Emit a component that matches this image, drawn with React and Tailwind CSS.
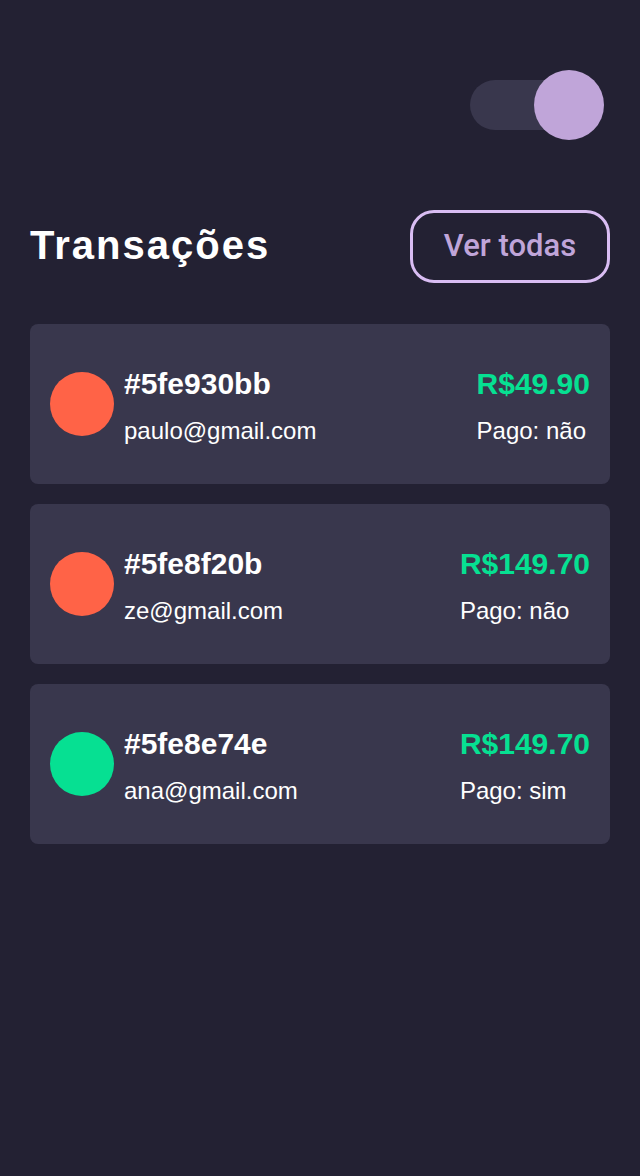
const transacoes = [
  { id: '#5fe930bb', email: 'paulo@gmail.com', valor: 'R$49.90', pago: false },
  { id: '#5fe8f20b', email: 'ze@gmail.com', valor: 'R$149.70', pago: false },
  { id: '#5fe8e74e', email: 'ana@gmail.com', valor: 'R$149.70', pago: true },
];

function Toggle() {
  return (
    <div className="flex justify-end pr-[10px]">
      <div className="relative w-[130px] h-[50px] rounded-full bg-[#39374d]">
        <div className="absolute right-[-4px] top-[-10px] w-[70px] h-[70px] rounded-full bg-[#c0a5d9]" />
      </div>
    </div>
  );
}

function TransacaoCard({ t }) {
  return (
    <div className="flex items-center justify-between rounded-lg bg-[#39374d] h-[160px] px-5">
      <div className="flex items-center">
        <div
          className={
            'w-16 h-16 rounded-full ' + (t.pago ? 'bg-[#06e092]' : 'bg-[#ff6347]')
          }
        />
        <div className="ml-[10px] mt-[3px] flex flex-col">
          <span className="text-[30px] leading-[34px] font-bold text-white">{t.id}</span>
          <span className="mt-[16px] text-[24px] leading-[28px] text-white">{t.email}</span>
        </div>
      </div>
      <div className="mt-[3px] flex flex-col">
        <span className="text-[30px] leading-[34px] font-bold text-[#06e092]">{t.valor}</span>
        <span className="mt-[16px] text-[24px] leading-[28px] text-white">
          Pago: {t.pago ? 'sim' : 'não'}
        </span>
      </div>
    </div>
  );
}

export default function App() {
  return (
    <div
      className="min-h-[1176px] bg-[#232133] px-[30px] pt-[80px]"
      style={{ fontFamily: '"Liberation Sans", Arial, sans-serif' }}
    >
      <Toggle />

      <div className="mt-[80px] flex items-center justify-between">
        <h1 className="mb-[4px] text-[40px] font-bold tracking-[2px] text-white">Transações</h1>
        <button
          className="h-[73px] w-[200px] rounded-[24px] border-[3px] border-[#d9bdf3] text-[31px] font-medium text-[#c0a5d9]"
          style={{ fontFamily: 'Roboto, sans-serif' }}
        >
          Ver todas
        </button>
      </div>

      <div className="mt-[41px] flex flex-col gap-5">
        {transacoes.map((t) => (
          <TransacaoCard key={t.id} t={t} />
        ))}
      </div>
    </div>
  );
}
